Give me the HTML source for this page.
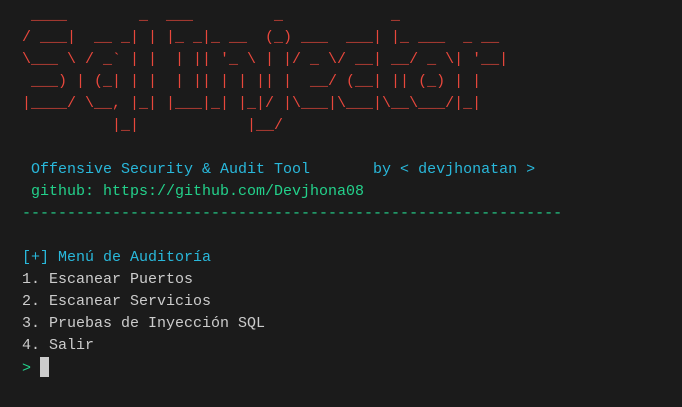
<!DOCTYPE html>
<html><head><meta charset="utf-8"><style>
html,body{margin:0;padding:0;background:#1b1b1b;width:682px;height:407px;overflow:hidden}
pre{position:absolute;left:22px;top:5px;margin:0;font-family:"Liberation Mono",monospace;font-size:15px;line-height:22px;color:#cccccc;white-space:pre}
.r{color:#e8473c}.c{color:#29b8db}.g{color:#23d18b}
.cur{display:inline-block;width:9px;height:20px;background:#cccccc;vertical-align:-5px}
</style></head><body>
<pre><span class="r"> ____        _  ___         _            _
/ ___|  __ _| | |_ _|_ __  (_) ___  ___| |_ ___  _ __
\___ \ / _` | |  | || '_ \ | |/ _ \/ __| __/ _ \| '__|
 ___) | (_| | |  | || | | || |  __/ (__| || (_) | |
|____/ \__, |_| |___|_| |_|/ |\___|\___|\__\___/|_|
          |_|            |__/</span>

<span class="c"> Offensive Security &amp; Audit Tool       by &lt; devjhonatan &gt;</span>
<span class="g"> github: https://github.com/Devjhona08</span>
<span class="g">------------------------------------------------------------</span>

<span class="c">[+] Menú de Auditoría</span>
1. Escanear Puertos
2. Escanear Servicios
3. Pruebas de Inyección SQL
4. Salir
<span class="g">&gt;</span> <span class="cur"></span></pre>
</body></html>
